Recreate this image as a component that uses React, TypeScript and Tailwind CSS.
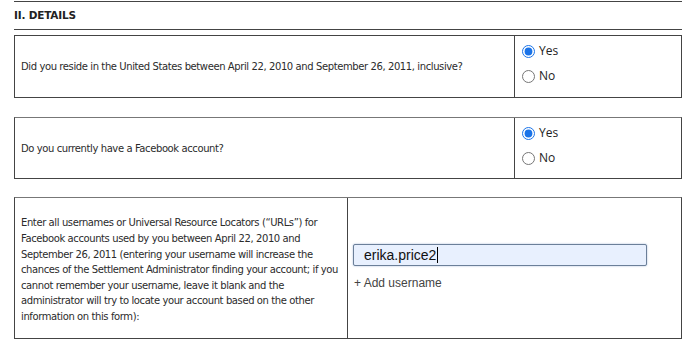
import React from 'react';

const bodyFont = "font-['DejaVu_Sans',Verdana,sans-serif]";
const uiFont = "font-['Open_Sans','Noto_Sans',sans-serif]";

const YesNo: React.FC<{ name: string }> = ({ name }) => (
  <div className={`flex flex-col gap-[7px] pl-[7px] pt-[6px] text-[12px] text-[#222] ${uiFont}`}>
    <label className="flex items-center gap-[2px]">
      <input type="radio" name={name} defaultChecked className="m-0 h-[13px] w-[13px] accent-[#1a73e8]" />
      <span className="pl-[2px]">Yes</span>
    </label>
    <label className="flex items-center gap-[2px]">
      <input type="radio" name={name} className="m-0 h-[13px] w-[13px]" />
      <span className="pl-[2px]">No</span>
    </label>
  </div>
);

const App: React.FC = () => {
  const lines = [
    'Enter all usernames or Universal Resource Locators (\u201cURLs\u201d) for',
    'Facebook accounts used by you between April 22, 2010 and',
    'September 26, 2011 (entering your username will increase the',
    'chances of the Settlement Administrator finding your account; if you',
    'cannot remember your username, leave it blank and the',
    'administrator will try to locate your account based on the other',
    'information on this form):',
  ];

  return (
    <div className={`h-[343px] w-[700px] overflow-hidden bg-white px-[14px] pt-px text-[#2b2b2b] ${bodyFont}`}>
      <div className="w-[668px]">
        <section className="border-y border-[#444]">
          <h2 className="flex h-[27px] items-center text-[10.5px] font-bold tracking-[-0.2px] text-[#222]">II. DETAILS</h2>
        </section>

        <div className="mt-[5px] flex h-[63px] border border-[#444]">
          <div className="flex flex-1 items-center whitespace-nowrap px-[6px] text-[10px] tracking-[-0.4px]">
            Did you reside in the United States between April 22, 2010 and September 26, 2011, inclusive?
          </div>
          <div className="w-[167px] border-l border-[#444]">
            <YesNo name="resided" />
          </div>
        </div>

        <div className="mt-[19px] flex h-[62px] border border-[#444] border-t-[#777]">
          <div className="flex flex-1 items-center px-[6px] text-[10px] tracking-[-0.4px]">
            Do you currently have a Facebook account?
          </div>
          <div className="w-[167px] border-l border-[#444]">
            <YesNo name="account" />
          </div>
        </div>

        <div className="mt-[18px] flex h-[142px] border border-[#444] border-t-[#777]">
          <div className="flex w-[332px] items-center whitespace-nowrap px-[6px] pt-[4px] text-[10px] leading-[15.6px] tracking-[-0.4px]">
            <p>
              {lines.map((l, i) => (
                <React.Fragment key={i}>
                  {l}
                  {i < lines.length - 1 && <br />}
                </React.Fragment>
              ))}
            </p>
          </div>
          <div className="flex flex-1 flex-col justify-center border-l border-[#444] pl-[5px]">
            <div className="flex h-[22px] w-[294px] items-center rounded-[2px] border border-[#6b7f99] bg-[#e8f0fe] pl-[10px] text-[14px] text-[#111] shadow-[0_0_2px_#9fb4d6] font-['Liberation_Sans',Arial,sans-serif]">
              erika.price2
              <span className="ml-px h-[16px] w-px bg-black" />
            </div>
            <div className="mt-[8px] pl-px text-[12px] text-[#444] font-['Liberation_Sans',Arial,sans-serif]">+ Add username</div>
          </div>
        </div>
      </div>
    </div>
  );
};

export default App;
